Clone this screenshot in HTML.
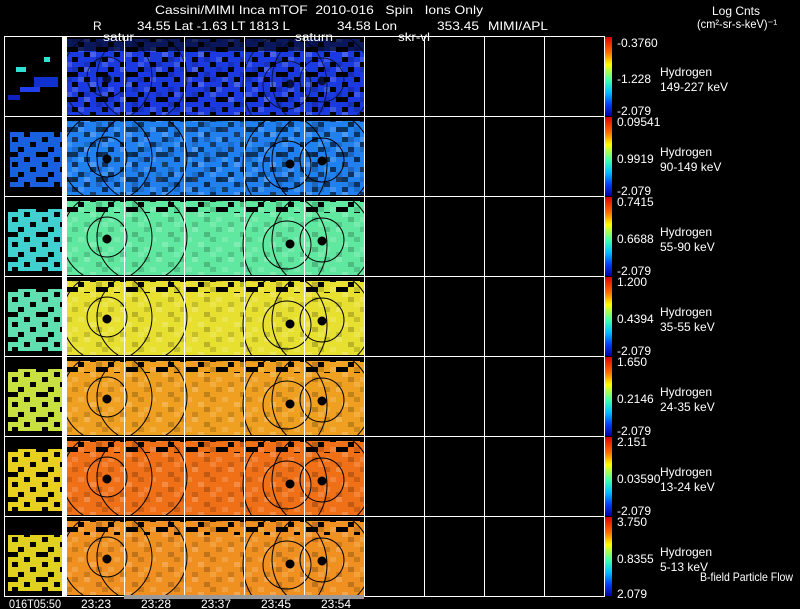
<!DOCTYPE html>
<html><head><meta charset="utf-8"><style>
html,body{margin:0;padding:0;background:#000;width:800px;height:609px;overflow:hidden}
svg{display:block}
text{font-family:"Liberation Sans",sans-serif;fill:#fff;font-size:12px;white-space:pre}
</style></head><body>
<svg width="800" height="609" viewBox="0 0 800 609" xmlns="http://www.w3.org/2000/svg" xml:space="preserve">
<defs>
<pattern id="nz" width="36" height="30" patternUnits="userSpaceOnUse">
<rect x="0" y="0" width="6" height="5" fill="#000" opacity=".15"/>
<rect x="12" y="0" width="6" height="5" fill="#fff" opacity=".2"/>
<rect x="24" y="5" width="6" height="5" fill="#000" opacity=".2"/>
<rect x="6" y="10" width="6" height="5" fill="#fff" opacity=".15"/>
<rect x="30" y="10" width="6" height="5" fill="#000" opacity=".15"/>
<rect x="18" y="15" width="6" height="5" fill="#fff" opacity=".2"/>
<rect x="0" y="20" width="6" height="5" fill="#fff" opacity=".15"/>
<rect x="24" y="20" width="6" height="5" fill="#000" opacity=".2"/>
<rect x="12" y="25" width="6" height="5" fill="#000" opacity=".15"/>
<rect x="30" y="25" width="6" height="5" fill="#fff" opacity=".15"/>
</pattern>
<pattern id="sp" width="30" height="25" patternUnits="userSpaceOnUse">
<rect x="0" y="0" width="6" height="5" fill="#000"/>
<rect x="18" y="5" width="6" height="5" fill="#000"/>
<rect x="6" y="10" width="12" height="5" fill="#000"/>
<rect x="24" y="15" width="6" height="5" fill="#000"/>
<rect x="12" y="20" width="6" height="5" fill="#000"/>
</pattern>
<linearGradient id="cb" x1="0" y1="0" x2="0" y2="1">
<stop offset="0" stop-color="#e00000"/><stop offset=".2" stop-color="#ff7000"/><stop offset=".35" stop-color="#ffff00"/><stop offset=".55" stop-color="#40ffb0"/><stop offset=".7" stop-color="#00c0ff"/><stop offset=".85" stop-color="#0040ff"/><stop offset="1" stop-color="#0000a0"/>
</linearGradient>
<clipPath id="pc"><rect x="67" y="0" width="297" height="78"/></clipPath>
<g id="circ" fill="none" stroke="#000" stroke-width="1">
<circle cx="107" cy="40" r="20"/><circle cx="107" cy="40" r="45"/>
<circle cx="142" cy="40" r="45"/>
<ellipse cx="285" cy="48" rx="42" ry="50"/>
<circle cx="287" cy="48" r="24"/><circle cx="322" cy="43" r="22"/><circle cx="322" cy="43" r="50"/>
<circle cx="107" cy="42" r="4" fill="#000"/><circle cx="290" cy="47" r="4" fill="#000"/><circle cx="322" cy="44" r="4" fill="#000"/>
</g>
</defs>

<text x="155" y="14" font-size="14" textLength="328" lengthAdjust="spacingAndGlyphs">Cassini/MIMI Inca mTOF  2010-016   Spin   Ions Only</text>
<text x="93" y="30" font-size="14">R</text>
<text x="137" y="30" font-size="14" textLength="153" lengthAdjust="spacingAndGlyphs">34.55 Lat -1.63 LT 1813 L</text>
<text x="337" y="30" font-size="14" textLength="60" lengthAdjust="spacingAndGlyphs">34.58 Lon</text>
<text x="437" y="30" font-size="14" textLength="42" lengthAdjust="spacingAndGlyphs">353.45</text>
<text x="488" y="30" font-size="14" textLength="60" lengthAdjust="spacingAndGlyphs">MIMI/APL</text>
<text x="712" y="15" font-size="12" textLength="48" lengthAdjust="spacingAndGlyphs">Log Cnts</text>
<text x="697" y="28" font-size="12" textLength="80" lengthAdjust="spacingAndGlyphs">(cm²-sr-s-keV)⁻¹</text>

<g>
<g transform="translate(0,37)">
<rect x="67" y="2" width="297" height="76" fill="#1a3ae0"/><rect x="67" y="2" width="297" height="76" fill="url(#nz)"/><rect x="67" y="2" width="297" height="76" fill="url(#sp)"/><rect x="67" y="0" width="297" height="14" fill="#000" opacity=".6"/>
<rect x="16" y="30" width="10" height="5" fill="#30e0d0"/><rect x="34" y="40" width="24" height="10" fill="#1030d0"/><rect x="20" y="50" width="20" height="5" fill="#2040f0"/><rect x="8" y="58" width="12" height="5" fill="#1020c0"/><rect x="44" y="20" width="6" height="5" fill="#30e0d0"/>
<g clip-path="url(#pc)" opacity=".7"><use href="#circ"/></g>
</g>
<g transform="translate(0,117)">
<rect x="67" y="4" width="297" height="74" fill="#2080f0"/><rect x="67" y="4" width="297" height="74" fill="url(#nz)"/><rect x="67" y="4" width="297" height="74" fill="url(#sp)" opacity=".6"/>
<rect x="10" y="15" width="52" height="55" fill="#1860e0"/><rect x="4" y="0" width="58" height="78" fill="url(#sp)"/>
<g clip-path="url(#pc)"><use href="#circ"/></g>
</g>
<g transform="translate(0,197)">
<rect x="67" y="4" width="297" height="74" fill="#60e8a0"/><rect x="67" y="4" width="297" height="74" fill="url(#nz)"/><rect x="67" y="4" width="297" height="12" fill="url(#sp)"/>
<rect x="8" y="12" width="54" height="62" fill="#40d0d0"/><rect x="4" y="0" width="58" height="78" fill="url(#sp)"/>
<g clip-path="url(#pc)"><use href="#circ"/></g>
</g>
<g transform="translate(0,277)">
<rect x="67" y="4" width="297" height="74" fill="#e8e030"/><rect x="67" y="4" width="297" height="74" fill="url(#nz)"/><rect x="67" y="4" width="297" height="12" fill="url(#sp)"/>
<rect x="8" y="12" width="54" height="62" fill="#60e0b0"/><rect x="4" y="0" width="58" height="78" fill="url(#sp)"/>
<g clip-path="url(#pc)"><use href="#circ"/></g>
</g>
<g transform="translate(0,357)">
<rect x="67" y="4" width="297" height="74" fill="#f0a020"/><rect x="67" y="4" width="297" height="74" fill="url(#nz)"/><rect x="67" y="4" width="297" height="12" fill="url(#sp)"/>
<rect x="8" y="12" width="54" height="62" fill="#c8e040"/><rect x="4" y="0" width="58" height="78" fill="url(#sp)"/>
<g clip-path="url(#pc)"><use href="#circ"/></g>
</g>
<g transform="translate(0,437)">
<rect x="67" y="4" width="297" height="74" fill="#f07018"/><rect x="67" y="4" width="297" height="74" fill="url(#nz)"/><rect x="67" y="4" width="297" height="12" fill="url(#sp)"/>
<rect x="8" y="12" width="54" height="62" fill="#e8d020"/><rect x="4" y="0" width="58" height="78" fill="url(#sp)"/>
<g clip-path="url(#pc)"><use href="#circ"/></g>
</g>
<g transform="translate(0,517)">
<rect x="67" y="4" width="297" height="74" fill="#f09020"/><rect x="67" y="4" width="297" height="74" fill="url(#nz)"/><rect x="67" y="4" width="297" height="14" fill="url(#sp)"/>
<rect x="8" y="18" width="54" height="56" fill="#e0d020"/><rect x="4" y="0" width="58" height="78" fill="url(#sp)"/>
<g clip-path="url(#pc)"><use href="#circ"/></g>
</g>
</g>

<g stroke="#fff" stroke-width="1" fill="none">
<rect x="4.5" y="36.5" width="600" height="560"/>
<path d="M62.5 36V597M124.5 36V597M184.5 36V597M244.5 36V597M304.5 36V597M364.5 36V597M424.5 36V597M484.5 36V597M544.5 36V597"/>
<path d="M4 116.5H605M4 196.5H605M4 276.5H605M4 356.5H605M4 436.5H605M4 516.5H605"/>
</g>
<rect x="62" y="36" width="5" height="561" fill="#fff"/>
<rect x="124" y="595" width="240" height="4" fill="#999"/>

<text x="103" y="41" font-size="13" textLength="31" lengthAdjust="spacingAndGlyphs">satur</text>
<text x="295" y="41" font-size="13" textLength="38" lengthAdjust="spacingAndGlyphs">saturn</text>
<text x="398" y="41" font-size="13" textLength="32" lengthAdjust="spacingAndGlyphs">skr-vl</text>

<g>
<rect x="605" y="37" width="7" height="79" fill="url(#cb)"/>
<rect x="605" y="117" width="7" height="79" fill="url(#cb)"/>
<rect x="605" y="197" width="7" height="79" fill="url(#cb)"/>
<rect x="605" y="277" width="7" height="79" fill="url(#cb)"/>
<rect x="605" y="357" width="7" height="79" fill="url(#cb)"/>
<rect x="605" y="437" width="7" height="79" fill="url(#cb)"/>
<rect x="605" y="517" width="7" height="79" fill="url(#cb)"/>
</g>
<g>
<text x="617" y="47">-0.3760</text><text x="617" y="83">-1.228</text><text x="617" y="115">-2.079</text>
<text x="617" y="126">0.09541</text><text x="617" y="163">0.9919</text><text x="617" y="195">-2.079</text>
<text x="617" y="206">0.7415</text><text x="617" y="243">0.6688</text><text x="617" y="275">-2.079</text>
<text x="617" y="286">1.200</text><text x="617" y="323">0.4394</text><text x="617" y="355">-2.079</text>
<text x="617" y="366">1.650</text><text x="617" y="403">0.2146</text><text x="617" y="435">-2.079</text>
<text x="617" y="446">2.151</text><text x="617" y="483">0.03590</text><text x="617" y="515">-2.079</text>
<text x="617" y="526">3.750</text><text x="617" y="563">0.8355</text><text x="617" y="598">2.079</text>
</g>
<g>
<text x="660" y="76">Hydrogen</text><text x="660" y="91">149-227 keV</text>
<text x="660" y="156">Hydrogen</text><text x="660" y="171">90-149 keV</text>
<text x="660" y="236">Hydrogen</text><text x="660" y="251">55-90 keV</text>
<text x="660" y="316">Hydrogen</text><text x="660" y="331">35-55 keV</text>
<text x="660" y="396">Hydrogen</text><text x="660" y="411">24-35 keV</text>
<text x="660" y="476">Hydrogen</text><text x="660" y="491">13-24 keV</text>
<text x="660" y="556">Hydrogen</text><text x="660" y="571">5-13 keV</text>
</g>
<text x="700" y="581" font-size="10" textLength="93" lengthAdjust="spacingAndGlyphs">B-field Particle Flow</text>

<g>
<text x="9" y="608" textLength="52" lengthAdjust="spacingAndGlyphs">016T05:50</text>
<text x="81" y="608">23:23</text>
<text x="141" y="608">23:28</text>
<text x="201" y="608">23:37</text>
<text x="261" y="608">23:45</text>
<text x="321" y="608">23:54</text>
</g>
</svg>
</body></html>
